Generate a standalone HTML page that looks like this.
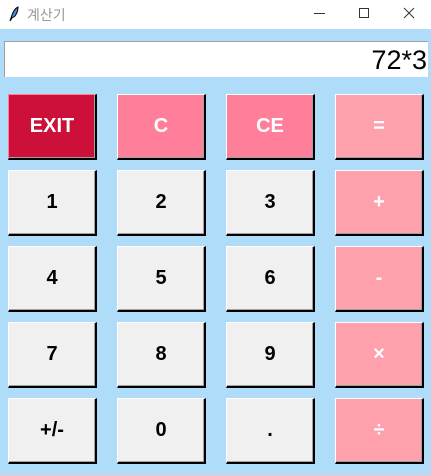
<!DOCTYPE html>
<html><head><meta charset="utf-8"><style>
*{margin:0;padding:0;box-sizing:border-box}
body{width:431px;height:475px;background:#afdcf9;position:relative;overflow:hidden;font-family:"Liberation Sans",Arial,sans-serif}
.tb{position:absolute;left:0;top:0;width:431px;height:29px;background:#fff}
.tt{position:absolute;left:27px;top:5px;font-size:14px;color:#999;font-family:"Liberation Sans","Noto Sans CJK KR",sans-serif}
.ent{position:absolute;left:4px;top:41px;width:424px;height:36px;background:#fff;border-top:1px solid #a0a0a0;border-left:1px solid #a0a0a0;font-size:27px;text-align:right;padding-right:1px;line-height:36px;color:#000}
.b{position:absolute;width:89px;height:66px;display:flex;align-items:center;justify-content:center;font-weight:bold;font-size:20px;border-top:1px solid #fff;border-left:1px solid #fff;border-right:2px solid #000;border-bottom:2px solid #000;box-shadow:inset -1px -1px 0 #a0a0a0}
.g{background:#f0f0f0;color:#000}
.r{background:#cc103a;color:#fff;border-top-color:#ff7f9b;border-left-color:#ff7f9b}
.p{background:#ff7f9b;color:#fff}
.q{background:#ffa0ad;color:#fff}
</style></head><body>
<div class="tb">
<svg style="position:absolute;left:8px;top:6px" width="12" height="16" viewBox="0 0 12 16"><path d="M2 15 L4 9 Q6 3 10 1 Q10 6 7 10 L4 12 Z" fill="#4a8ad8" stroke="#000" stroke-width="1"/></svg>
<div class="tt">계산기</div>
<div style="position:absolute;left:314px;top:13px;width:11px;height:1px;background:#333"></div>
<div style="position:absolute;left:359px;top:8px;width:10px;height:10px;border:1px solid #333"></div>
<svg style="position:absolute;left:403px;top:7px" width="12" height="12"><path d="M1 1L11 11M11 1L1 11" stroke="#333" stroke-width="1"/></svg>
</div>
<div class="ent">72*3</div>
<div class="b r" style="left:8px;top:94px">EXIT</div>
<div class="b p" style="left:117px;top:94px">C</div>
<div class="b p" style="left:226px;top:94px">CE</div>
<div class="b q" style="left:335px;top:94px">=</div>
<div class="b g" style="left:8px;top:170px">1</div>
<div class="b g" style="left:117px;top:170px">2</div>
<div class="b g" style="left:226px;top:170px">3</div>
<div class="b q" style="left:335px;top:170px">+</div>
<div class="b g" style="left:8px;top:246px">4</div>
<div class="b g" style="left:117px;top:246px">5</div>
<div class="b g" style="left:226px;top:246px">6</div>
<div class="b q" style="left:335px;top:246px">-</div>
<div class="b g" style="left:8px;top:322px">7</div>
<div class="b g" style="left:117px;top:322px">8</div>
<div class="b g" style="left:226px;top:322px">9</div>
<div class="b q" style="left:335px;top:322px">×</div>
<div class="b g" style="left:8px;top:398px">+/-</div>
<div class="b g" style="left:117px;top:398px">0</div>
<div class="b g" style="left:226px;top:398px">.</div>
<div class="b q" style="left:335px;top:398px">÷</div>
</body></html>
